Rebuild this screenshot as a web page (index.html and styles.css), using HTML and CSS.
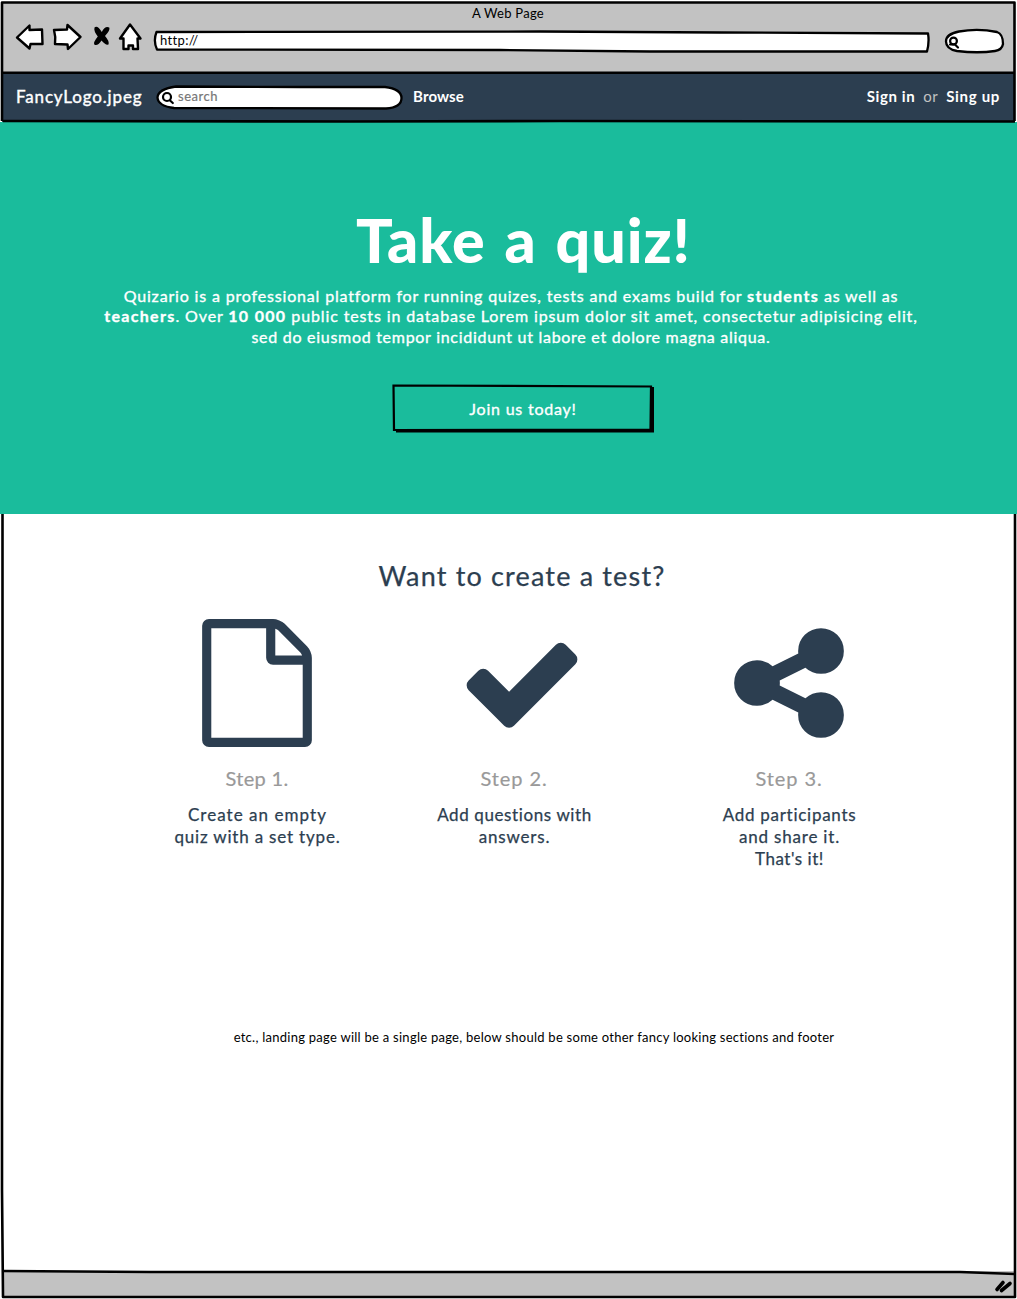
FILE: index.html
```html
<!DOCTYPE html>
<html lang="en">
<head>
<meta charset="utf-8">
<title>A Web Page</title>
<link rel="stylesheet" href="styles.css">
</head>
<body>
<div class="window">
  <header class="chrome">
    <div class="chrome-title"><span class="t-title">A Web Page</span></div>
    <div class="toolbar">
      <svg class="controls" width="128" height="32" viewBox="15 21 128 32">
        <g class="ink-shape">
          <path d="M17 37.500 29.500 25.500V30L42 29.500 42.500 44H30.500L29.500 48.500Z"/>
          <path d="M54 30 67 29.500 67.500 25 80.500 37 68 49 67.500 44.500 55 44Q56 37 54 30Z"/>
          <path d="M130 24.500 140.500 38.500H137.500L138 49H133V45.500H128.500V49H123.500V38.500H120Z"/>
        </g>
        <path class="cross" d="M94.500 27.500Q97.500 25 101.800 32 105 25.500 109.300 27.500 110.500 30 105 36 109.500 41 108.500 44.500 105.500 45.500 101.500 40.500 97.500 46.500 94.300 44.500 93 42.500 97.800 36.500 93.500 31 94.500 27.500Z"/>
      </svg>
      <div class="address">
        <svg class="outline" width="777" height="23" viewBox="153 30 777 23"><path class="ink-box" d="M156.500 32 540 31.500 720 32.500 928 33.500Q929.500 42 927 51.500L650 51.500 500 50 157 49.500Q153 41 156.500 32Z"/></svg>
        <span class="t-url">http://</span>
      </div>
      <div class="mini-search">
        <svg class="outline" width="61" height="27" viewBox="944 28 61 27"><path class="ink-box" d="M959 31.500Q978 28 997 32 1003 34 1003 44 1002 50 995 51 978 53.500 957 51 946 49 946 41.500 946 34 959 31.500Z"/><circle class="lens" cx="953.500" cy="41" r="3.400"/><path class="lens" d="M950 44.500H955L958 47.500"/></svg>
      </div>
    </div>
  </header>

  <nav class="navbar">
    <a class="logo"><span class="t-logo">FancyLogo.jpeg</span></a>
    <div class="search">
      <svg class="outline" width="248" height="26" viewBox="156 84 248 26"><path class="ink-box" d="M176 86.500 300 87 385 87Q401.500 89 401.500 98 401.500 107.500 386 108.500L174 108Q158 106 157.500 97.500 158 89 176 86.500Z"/><circle class="lens" cx="167" cy="97" r="4"/><path class="lens" d="M170 100.500 172.800 103"/></svg>
      <span class="t-search">search</span>
    </div>
    <a class="browse"><span class="t-browse">Browse</span></a>
    <div class="account">
      <a><span class="t-signin">Sign in</span></a>
      <span class="or">or</span>
      <a><span class="t-signup">Sing up</span></a>
    </div>
  </nav>

  <section class="hero">
    <h1>Take a quiz!</h1>
    <p>
      <span class="t-p1">Quizario is a professional platform for running quizes, tests and exams build for <b>students</b> as well as</span>
      <span class="t-p2"><b>teachers</b>. Over <b>10 000</b> public tests in database Lorem ipsum dolor sit amet, consectetur adipisicing elit,</span>
      <span class="t-p3">sed do eiusmod tempor incididunt ut labore et dolore magna aliqua.</span>
    </p>
    <a class="join">
      <svg class="outline" width="264" height="50" viewBox="391 385 264 50"><path class="button-shadow" d="M396 430.500H651V388H654V433.500H396Z"/><path class="button-line" d="M393.500 386.500 651 387.500 650.500 430.500 394 431Z"/></svg>
      <span class="t-join">Join us today!</span>
    </a>
  </section>

  <main class="content">
    <h2>Want to create a test?</h2>
    <div class="steps">
      <article class="step">
        <svg class="icon" width="110" height="128" viewBox="0 0 1536 1792"><path d="M1468 380q28 28 48 76t20 88v1152q0 40-28 68t-68 28h-1344q-40 0-68-28t-28-68v-1600q0-40 28-68t68-28h896q40 0 88 20t76 48zM1024 136v376h376q-10-29-22-41l-313-313q-12-12-41-22zM1408 1664v-1024h-416q-40 0-68-28t-28-68v-416h-768v1536h1280z"/></svg>
        <h3><span class="t-s1">Step 1.</span></h3>
        <p><span class="t-a1">Create an empty</span><span class="t-a2">quiz with a set type.</span></p>
      </article>
      <article class="step">
        <svg class="icon icon-check" width="128" height="128" viewBox="0 0 1792 1792"><path d="M1671 566q0 40-28 68l-724 724-136 136q-28 28-68 28t-68-28l-136-136-362-362q-28-28-28-68t28-68l136-136q28-28 68-28t68 28l294 295 656-657q28-28 68-28t68 28l136 136q28 28 28 68z"/></svg>
        <h3><span class="t-s2">Step 2.</span></h3>
        <p><span class="t-b1">Add questions with</span><span class="t-b2">answers.</span></p>
      </article>
      <article class="step">
        <svg class="icon" width="110" height="128" viewBox="64 0 1536 1792"><path d="M1280 1024q133 0 226.500 93.500t93.500 226.500-93.500 226.500-226.500 93.500-226.500-93.500-93.500-226.500q0-12 2-34l-360-180q-92 86-218 86-133 0-226.500-93.500t-93.500-226.500 93.500-226.500 226.500-93.500q126 0 218 86l360-180q-2-22-2-34 0-133 93.500-226.500t226.500-93.500 226.500 93.500 93.500 226.500-93.500 226.500-226.500 93.500q-126 0-218-86l-360 180q2 22 2 34t-2 34l360 180q92-86 218-86z"/></svg>
        <h3><span class="t-s2">Step 3.</span></h3>
        <p><span class="t-c1">Add participants</span><span class="t-c2">and share it.</span><span class="t-c3">That's it!</span></p>
      </article>
    </div>
    <p class="note">etc., landing page will be a single page, below should be some other fancy looking sections and footer</p>
  </main>
  <footer class="statusbar"></footer>
  <svg class="frame" width="1017" height="1299" viewBox="0 0 1017 1299">
    <path d="M2 121V2.500H1014.500V121M2.500 514V880L2 1100 2 1190 3 1297H1015V514"/>
    <path d="M3 72.800H1015M3 121 350 121.500 560 121 1015 121.500"/>
    <path d="M3 1271 150 1272H900L960 1272 1015 1274"/>
    <path class="grip" d="M997 1289.500 1003 1282.500M1001.500 1290.500 1010 1283.500"/>
  </svg>
</div>
</body>
</html>
```
FILE: styles.css
```css
* { box-sizing: border-box; }
body { margin: 0; background: #fff; color: #2c3e50; font-family: Lato, "Liberation Sans", sans-serif; }
h1, h2, h3, p { margin: 0; font-weight: 400; }
span { white-space: nowrap; }

/* Window frame and hand-drawn outlines */
.window { position: relative; width: 1017px; height: 1299px; display: flex; flex-direction: column; overflow: hidden; }
.frame { position: absolute; inset: 0; fill: none; stroke: #000; stroke-width: 2.600; stroke-linejoin: round; pointer-events: none; }
.frame .grip { stroke-width: 3.600; stroke-linecap: round; }
.outline { position: absolute; left: 0; top: 0; z-index: -1; }
.ink-box { fill: #fff; stroke: #000; stroke-width: 2.300; stroke-linejoin: round; }
.ink-shape { fill: #fff; stroke: #000; stroke-width: 2.400; stroke-linejoin: round; }
.cross { fill: #000; }
.lens { fill: none; stroke: #000; stroke-width: 2.200; stroke-linecap: round; }

/* Browser chrome */
.chrome { height: 73px; margin: 2px 2px -2px; padding-top: 2px; background: #c2c2c2; color: #000; }
.chrome-title { height: 17px; margin-left: -1px; text-align: center; font-size: 13px; line-height: 18px; }
.toolbar { display: flex; padding-left: 13px; }
.controls { display: block; }
.address { position: relative; z-index: 0; width: 777px; height: 23px; margin: 9px 0 0 10px; padding-left: 7px; font-size: 13px; line-height: 21px; }
.mini-search { position: relative; z-index: 0; width: 61px; height: 27px; margin: 7px 0 0 14px; }

/* Site navigation */
.navbar { display: flex; align-items: flex-start; height: 49px; margin: 0 2px; padding: 11px 15px 0 14px; background: #2c3e50; color: #fff; font-weight: 700; font-size: 15px; line-height: 25px; }
.logo { width: 140px; font-size: 17px; font-weight: 400; -webkit-text-stroke: .4px; }
.search { position: relative; z-index: 0; width: 248px; height: 26px; padding-left: 22px; color: #777; font-size: 13px; font-weight: 400; line-height: 25px; -webkit-text-stroke: .2px; }
.browse { margin-left: 9px; }
.account { display: flex; gap: 8px; margin-left: auto; }
.or { color: #c2c2c2; font-weight: 400; letter-spacing: .5px; }

/* Hero */
.hero { display: flex; flex-direction: column; align-items: center; height: 392px; padding-top: 81px; background: #1abc9c; color: #fff; }
.hero h1 { margin-left: 30px; font-size: 61px; font-weight: 900; line-height: 73px; letter-spacing: .9px; word-spacing: 3.600px; white-space: nowrap; }
.hero p { display: flex; flex-direction: column; align-items: center; margin: 9.500px 0 0 5px; font-size: 16px; line-height: 20.500px; -webkit-text-stroke: .35px; }
.hero b { letter-spacing: 1.300px; }
.join { position: relative; z-index: 0; display: block; width: 264px; height: 50px; margin: 37px 0 0 29px; text-align: center; font-size: 16px; line-height: 49px; -webkit-text-stroke: .35px; }
.button-line { fill: none; stroke: #000; stroke-width: 2.200; }

/* Steps */
.content { flex: 1; padding-top: 44px; }
h2 { padding-left: 27px; text-align: center; font-size: 27px; line-height: 36px; letter-spacing: 1.170px; -webkit-text-stroke: .25px; }
.steps { display: grid; grid-template-columns: 270px 244px 306px; margin: 25px 0 0 122px; }
.step { display: flex; flex-direction: column; align-items: center; }
.icon { display: block; fill: #2c3e50; }
.icon-check { margin-left: 16px; }
h3 { margin-top: 19px; color: #999; font-size: 20px; line-height: 24px; -webkit-text-stroke: .2px; }
.step p { display: flex; flex-direction: column; align-items: center; margin: 14px 0 0 1px; font-size: 17px; line-height: 22px; -webkit-text-stroke: .25px; }
.note { padding-left: 51px; margin-top: 158px; text-align: center; color: #000; font-size: 13px; line-height: 18px; letter-spacing: .26px; }
.statusbar { height: 26px; margin: 0 2px 2px; background: #c2c2c2; }

/* Tracking per line of text */
.t-title { letter-spacing: .27px; }
.t-url { letter-spacing: .366px; }
.t-logo { letter-spacing: .85px; }
.t-search { letter-spacing: .518px; }
.t-browse { letter-spacing: .141px; }
.t-signin { letter-spacing: .6px; }
.t-signup { letter-spacing: .68px; }
.t-p1 { letter-spacing: .83px; }
.t-p2 { letter-spacing: .87px; }
.t-p3 { letter-spacing: .716px; }
.t-join { letter-spacing: .78px; }
.t-s1 { letter-spacing: .324px; }
.t-s2 { letter-spacing: .895px; }
.t-a1 { letter-spacing: 1.042px; }
.t-a2 { letter-spacing: .807px; }
.t-b1 { letter-spacing: .609px; }
.t-b2 { letter-spacing: .8px; }
.t-c1 { letter-spacing: .728px; }
.t-c2 { letter-spacing: .81px; }
.t-c3 { letter-spacing: .539px; }
```
